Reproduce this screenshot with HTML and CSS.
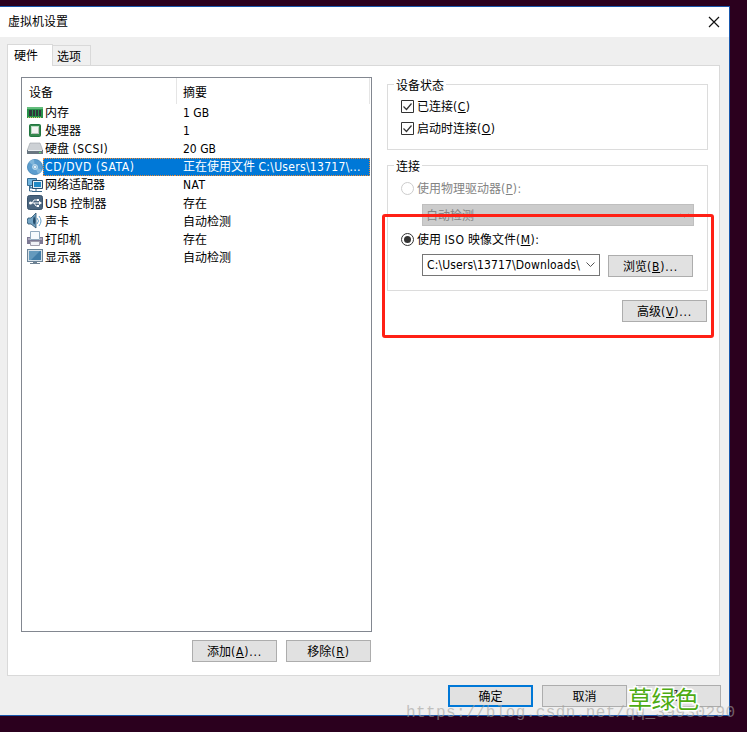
FILE: index.html
```html
<!DOCTYPE html>
<html lang="zh-CN">
<head>
<meta charset="utf-8">
<title>虚拟机设置</title>
<link rel="stylesheet" href="styles.css">
</head>
<body>
<main class="dialog">
  <header class="titlebar">
    <h1>虚拟机设置</h1>
    <svg class="close" width="12" height="12" viewBox="0 0 12 12"><path d="M1 1l10 10M11 1L1 11" stroke="#111" stroke-width="1.2"/></svg>
  </header>
  <nav class="tabs"><span class="tab active">硬件</span><span class="tab">选项</span></nav>
  <section class="panel">
    <div class="left">
      <div class="list">
        <div class="head"><span class="device">设备</span><span class="summary">摘要</span></div>
        <div class="row"><svg viewBox="0 0 16 16"><path d="M0 2h16v11H0z" fill="#26924a"/><path d="M0 2h16v2H0z" fill="#64bd7c"/><path d="M2 5h3v6H2zM6 5h2v6H6zM9 5h2v6H9zM12 5h2v6h-2z" fill="#30383a"/><path d="M1 12.500h14" stroke="#d5c76b" stroke-dasharray="1 1"/></svg><span class="name">内存</span><span class="value">1 GB</span></div>
        <div class="row"><svg viewBox="0 0 16 16"><rect x="2.500" y="1.500" width="11" height="12" rx="1" fill="#36884e" stroke="#217640"/><rect x="4.500" y="3.500" width="7" height="7" fill="#f3f4f3" stroke="#b9dec3"/><path d="M5 10.500h6.500V5" fill="none" stroke="#bac2bc"/></svg><span class="name">处理器</span><span class="value">1</span></div>
        <div class="row"><svg viewBox="0 0 16 16"><path d="M3 2h10l3 8H0z" fill="#cdd1d5" stroke="#9ba3aa" stroke-width=".6"/><path d="M0 9h16v4H0z" fill="#697681"/><path d="M1 9.5h14" stroke="#e8edf0"/><path d="M12 11h2v1h-2z" fill="#5fe06e"/></svg><span class="name">硬盘 <b>(SCSI)</b></span><span class="value">20 GB</span></div>
        <div class="row selected"><svg viewBox="0 0 16 16"><circle cx="8" cy="8" r="7.6" fill="#5c9dce" stroke="#347aaf" stroke-width=".7"/><path d="M8 8L2 3A8 8 0 0 1 7 .5zM8 8l7 3a8 8 0 0 1-4 4z" fill="#7fb5da"/><circle cx="8" cy="8" r="2.500" fill="#8ebddd" stroke="#d7e9f5" stroke-width=".7"/><circle cx="8" cy="8" r="1" fill="#fff"/></svg><span class="name"><b class="disc">CD/DVD (SATA)</b></span><span class="value">正在使用文件 <b class="path">C:\Users\13717\...</b></span></div>
        <div class="row"><svg viewBox="0 0 16 16"><path d="M.5 1.500h9v7h-9zM3 9v2h4" fill="#70b4de" stroke="#376d94"/><path d="M5.500 3.500h10v8h-10z" fill="#e6eef4" stroke="#294f6d"/><path d="M7 5h7v5H7z" fill="#248bc5"/><path d="M9 12v2M5 14.500h10M2.500 9v5h3" fill="none" stroke="#3b6788"/></svg><span class="name">网络适配器</span><span class="value"><b>NAT</b></span></div>
        <div class="row"><svg viewBox="0 0 16 16"><rect x=".5" y=".5" width="15" height="14" rx="2" fill="#4a657f" stroke="#39536c"/><path d="M3 8h10M5 8l2-3h3M7 8l2 3h2" fill="none" stroke="#f5f7fa"/><circle cx="3.500" cy="8" r="1.500" fill="#fff"/><path d="M10 4h2v2h-2zM10 10h2v2h-2zM12 6l3 2-3 2z" fill="#fff"/></svg><span class="name usb">USB 控制器</span><span class="value">存在</span></div>
        <div class="row"><svg viewBox="0 0 16 16"><path d="M1 5h3l5-5v15l-5-4H1Q-1 8 1 5" fill="#75a5c5" stroke="#28506d" stroke-width=".8"/><path d="M7 3q3 5 0 9-2-4 0-9" fill="#234b69"/><path d="M10 5q3 3 0 6M12 3q4 5 0 10" fill="none" stroke="#68a3cc"/></svg><span class="name">声卡</span><span class="value">自动检测</span></div>
        <div class="row"><svg viewBox="0 0 16 16"><path d="M3.500 0.500h9v8h-9z" fill="#f5fafd" stroke="#91aabe"/><path d="M0 6h3v3h10V6h3v7H0z" fill="#7c7893"/><path d="M1 8h2M13 8h2" stroke="#ded9e9"/><path d="M3.500 10.500h9v4h-9z" fill="#f1f2f7" stroke="#a19fae"/></svg><span class="name">打印机</span><span class="value">存在</span></div>
        <div class="row"><svg viewBox="0 0 16 16"><rect x=".5" y=".5" width="15" height="12" fill="#d7e1e8" stroke="#6c8498"/><path d="M2 2h12v9H2z" fill="#417da7"/><path d="M2 2h11L4 11H2z" fill="#659abd"/><path d="M6 13h4v1h3v1H3v-1h3z" fill="#6e8293"/></svg><span class="name">显示器</span><span class="value">自动检测</span></div>
      </div>
      <div class="actions"><button><span>添加<b>(<u>A</u>)...</b></span></button><button><span>移除<b>(<u>R</u>)</b></span></button></div>
    </div>
    <div class="right">
      <section class="group status"><h2>设备状态</h2>
        <label class="choice"><svg class="mark" viewBox="0 0 13 13"><path d="M.5.5h12v12H.5z" fill="#fff" stroke="#333"/><path d="M2.500 6.500l3 3 5-6" fill="none" stroke="#333" stroke-width="1.2"/></svg><span>已连接<b>(<u>C</u>)</b></span></label>
        <label class="choice"><svg class="mark" viewBox="0 0 13 13"><path d="M.5.5h12v12H.5z" fill="#fff" stroke="#333"/><path d="M2.500 6.500l3 3 5-6" fill="none" stroke="#333" stroke-width="1.2"/></svg><span>启动时连接<b>(<u>O</u>)</b></span></label>
      </section>
      <section class="group connection"><h2>连接</h2>
        <label class="choice disabled"><svg class="mark" viewBox="0 0 13 13"><circle cx="6.500" cy="6.500" r="6" fill="#fff" stroke="#ccc"/></svg><span>使用物理驱动器<b>(<u>P</u>):</b></span></label>
        <div class="combo off"><span>自动检测</span><svg viewBox="0 0 9 6"><path d="M.5.5l4 4 4-4" fill="none" stroke="#aaa"/></svg></div>
        <label class="choice iso"><svg class="mark" viewBox="0 0 13 13"><circle cx="6.500" cy="6.500" r="6" fill="#fff" stroke="#333"/><circle cx="6.500" cy="6.500" r="3.500" fill="#333"/></svg><span>使用 <b>ISO</b> 映像文件<b>(<u>M</u>):</b></span></label>
        <div class="fileline"><div class="combo"><span class="download">C:\Users\13717\Downloads\</span><svg viewBox="0 0 9 6"><path d="M.5.5l4 4 4-4" fill="none" stroke="#555"/></svg></div><button><span>浏览<b>(<u>B</u>)...</b></span></button></div>
      </section>
      <button class="advanced"><span>高级<b>(<u>V</u>)...</b></span></button>
    </div>
  </section>
  <footer><button class="primary"><span>确定</span></button><button><span>取消</span></button><button><span>帮助</span></button></footer>
</main>
<div class="highlight"></div>
<div class="watermark">https://blog.csdn.net/qq_39930290</div>
<div class="stamp">草绿色</div>
</body>
</html>
```
FILE: styles.css
```css
* { box-sizing: border-box; }
body { margin: 0; padding-top: 6px; width: 747px; height: 732px; overflow: hidden; position: relative; background: #2b001e; color: #000; font: 12px/16px "DejaVu Sans Condensed", "Noto Sans CJK SC", sans-serif; }
h1, h2 { margin: 0; font: inherit; }
b { font-weight: normal; letter-spacing: .5px; }
u { text-underline-offset: 1px; text-decoration-thickness: 1px; }
.dialog { width: 730px; height: 710px; border: solid #1857ac; border-width: 1px 1px 1px 0; background: #efefef; }
.titlebar { height: 30px; padding: 0 9px 0 8px; display: flex; align-items: center; justify-content: space-between; background: #fff; }
.tabs { height: 28px; margin-left: 7px; padding-top: 7px; display: flex; align-items: flex-end; }
.tab { width: 38px; height: 20px; padding: 3px 0 0 4px; border: 1px solid #d9d9d9; border-left: 0; border-bottom: 0; background: #f0f0f0; }
.tab.active { width: 46px; height: 22px; padding: 3px 0 0 6px; border-left: 1px solid #d9d9d9; background: #fff; position: relative; z-index: 1; margin-bottom: -1px; }
.panel { width: 713px; height: 611px; margin-left: 7px; padding: 11px 11px 0 13px; border: 1px solid #d9d9d9; background: #fff; display: flex; gap: 15px; }
.left { width: 351px; }
.list { height: 555px; border: 1px solid #828790; }
.head { display: flex; height: 26px; padding-left: 7px; }
.head span { padding-top: 7px; }
.device { width: 148px; border-right: 1px solid #e5e5e5; }
.summary { flex: 1; padding-left: 6px; margin-right: 1px; border-right: 1px solid #e5e5e5; }
.row { height: 18px; display: flex; align-items: center; padding-left: 5px; white-space: nowrap; }
.row > svg { width: 16px; height: 16px; flex: none; }
.name { width: 132px; height: 18px; line-height: 18px; padding-left: 2px; }
.value { flex: 1; height: 18px; line-height: 18px; padding-left: 8px; margin-right: 1px; }
.row:nth-child(n+7) .name, .row:nth-child(n+7) .value { line-height: 20px; }
.disc { letter-spacing: .6px; }
.path { letter-spacing: .3px; }
.selected .name, .selected .value { color: #fff; background: #0078d7; border: dotted #ef8b34; border-width: 1px 0; line-height: 16px; }
.selected .name { border-left-width: 1px; padding-left: 1px; }
.selected .value { border-right-width: 1px; }
.actions { display: flex; justify-content: flex-end; gap: 9px; margin: 8px 1px 0 0; }
button { width: 85px; height: 22px; margin: 0; padding: 2px 0 0; border: 1px solid #adadad; background: #e1e1e1; color: #000; font: inherit; }
button b { letter-spacing: .8px; }
.right { width: 321px; padding-top: 7px; }
.group { position: relative; border: 1px solid #dcdcdc; padding-left: 13px; }
.group h2 { width: max-content; height: 16px; margin: -8px 0 0 -7px; padding: 1px 2px 0; background: #fff; }
.status { height: 66px; }
.connection { height: 126px; margin-top: 15px; }
.choice { display: flex; align-items: center; gap: 3px; height: 16px; margin-top: 6px; }
.choice b { letter-spacing: .5px; }
.choice span { padding-top: 2px; }
.status h2 + .choice { margin-top: 5px; }
.mark { width: 13px; height: 13px; flex: none; }
.disabled { color: #838383; }
.combo { width: 178px; height: 22px; padding: 0 4px; display: flex; align-items: center; justify-content: space-between; border: 1px solid #767676; background: #fff; }
.combo svg { width: 9px; height: 6px; }
.combo.off { width: 272px; margin: 8px 0 0 21px; padding: 2px 4px 0 3px; border-color: #bfbfbf; background: #ccc; color: #838383; }
.download { letter-spacing: .14px; }
.iso { margin-top: 5px; }
.iso span { padding-top: 1px; }
.fileline { display: flex; gap: 8px; margin: 7px 0 0 21px; }
.fileline button { margin-top: 1px; }
.advanced { display: block; margin: 9px 1px 0 auto; }
footer { display: flex; justify-content: flex-end; gap: 9px; padding: 9px 8px 0 0; }
.primary { border: 2px solid #0078d7; }
.highlight { position: absolute; left: 382px; top: 214px; width: 332px; height: 124px; border: 3px solid #ff2015; border-radius: 3px; }
.watermark { position: absolute; left: 406px; top: 702px; white-space: nowrap; color: #a1a09c99; font: 16px/22px "Liberation Mono", monospace; letter-spacing: .38px; }
.stamp { position: absolute; left: 628px; top: 681px; color: #4dab12; font: 24px/34px "Noto Sans CJK SC", sans-serif; letter-spacing: -0.5px; -webkit-text-stroke: 3px #fff; paint-order: stroke fill; }
```
